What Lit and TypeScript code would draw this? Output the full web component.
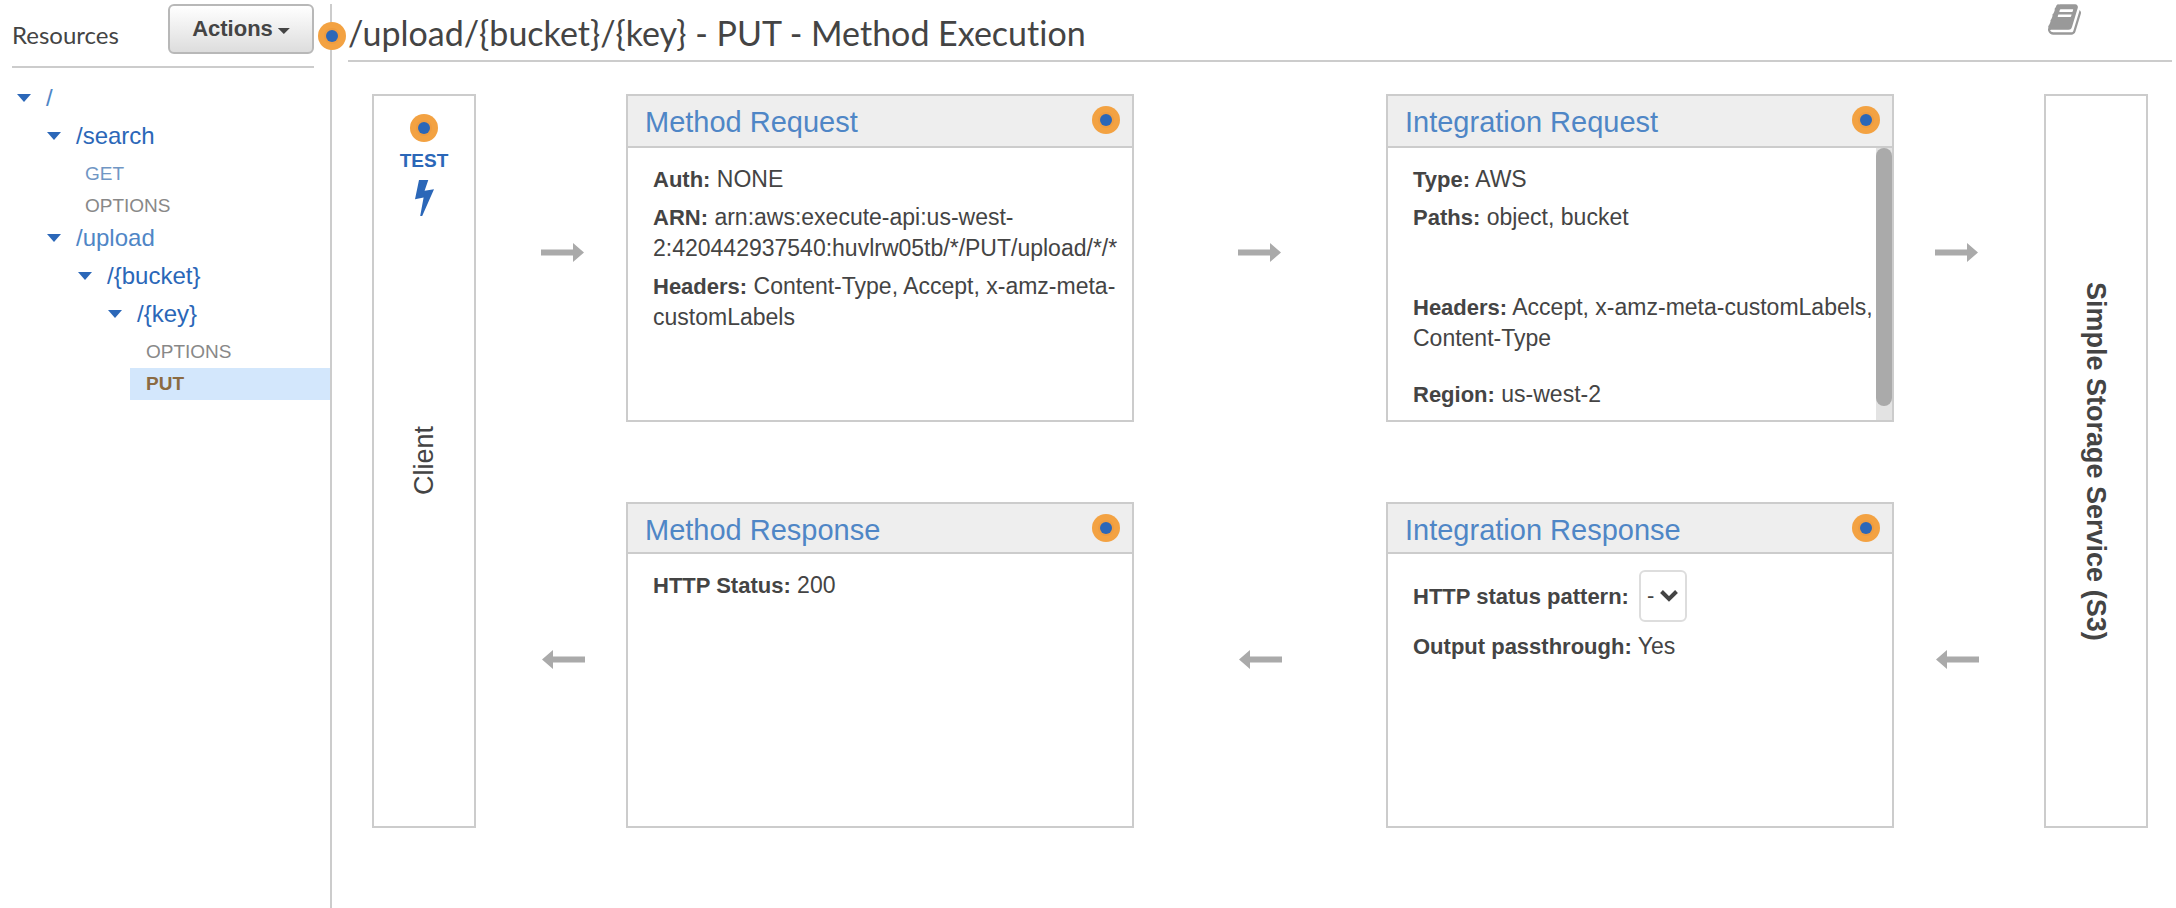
import { LitElement, html, css, svg, nothing } from "lit";
import { customElement, property } from "lit/decorators.js";

const palette = css`
  :host {
    --line: #ccc;
    --text: #444;
    --link: #2b67b8;
    --link-soft: #4f86c6;
    --sans: "Liberation Sans", Arial, Helvetica, sans-serif;
    --heading: Lato, "Open Sans", sans-serif;
    box-sizing: border-box;
  }
  *,
  *::before,
  *::after {
    box-sizing: border-box;
  }
`;

@customElement("beacon-dot")
export class BeaconDot extends LitElement {
  static styles = css`
    :host {
      display: block;
      flex: none;
      width: 28px;
      height: 28px;
    }
    svg {
      display: block;
    }
  `;
  render() {
    return html`<svg width="28" height="28" viewBox="0 0 28 28" aria-hidden="true">
      <circle cx="14" cy="14" r="14" fill="#f3a242" />
      <circle cx="14" cy="14" r="8" fill="#ee9c40" />
      <circle cx="14" cy="14" r="6" fill="#2b67b8" />
    </svg>`;
  }
}

@customElement("flow-arrow")
export class FlowArrow extends LitElement {
  @property() direction: "left" | "right" = "right";
  static styles = css`
    :host {
      display: block;
    }
    svg {
      display: block;
    }
  `;
  render() {
    const shape =
      this.direction === "right"
        ? svg`<path d="M0 6.5h32V0l11 9.5L32 19v-6.500H0z" />`
        : svg`<path d="M44 6.500H12V0L1 9.500 12 19v-6.500h32z" />`;
    return html`<svg width="44" height="19" viewBox="0 0 44 19" fill="#aaa" aria-hidden="true">${shape}</svg>`;
  }
}

interface TreeRow {
  label: string;
  depth: number;
  kind: "node" | "method";
  tone?: "soft" | "get" | "selected";
}

const rows: TreeRow[] = [
  { label: "/", depth: 0, kind: "node", tone: "soft" },
  { label: "/search", depth: 1, kind: "node" },
  { label: "GET", depth: 1, kind: "method", tone: "get" },
  { label: "OPTIONS", depth: 1, kind: "method" },
  { label: "/upload", depth: 1, kind: "node", tone: "soft" },
  { label: "/{bucket}", depth: 2, kind: "node" },
  { label: "/{key}", depth: 3, kind: "node" },
  { label: "OPTIONS", depth: 3, kind: "method" },
  { label: "PUT", depth: 3, kind: "method", tone: "selected" },
];

@customElement("resource-tree")
export class ResourceTree extends LitElement {
  static styles = [
    palette,
    css`
      :host {
        display: block;
        font-family: var(--sans);
      }
      ul {
        list-style: none;
        margin: 0;
        padding: 0;
      }
      .depth-1 {
        margin-left: 30px;
      }
      .depth-2 {
        margin-left: 61px;
      }
      .depth-3 {
        margin-left: 91px;
      }
      a {
        text-decoration: none;
        color: var(--link);
      }
      .node {
        display: flex;
        align-items: center;
        gap: 15px;
        height: 38px;
        padding: 0 0 6px 17px;
        font-size: 24px;
        line-height: 32px;
      }
      .caret {
        width: 14px;
        height: 8px;
        padding: 0;
        border: 0;
        background: var(--link);
        clip-path: polygon(0 0, 100% 0, 50% 100%);
      }
      .soft a {
        color: var(--link-soft);
      }
      .method {
        height: 32px;
        padding-left: 16px;
        font-size: 19px;
        line-height: 32px;
      }
      .method.depth-1 {
        padding-left: 55px;
      }
      .method.depth-3 {
        margin-left: 130px;
      }
      .method a {
        color: #888;
      }
      .get a {
        color: #7096c4;
      }
      .selected {
        background: #d3e7fc;
        font-weight: bold;
      }
      .selected a {
        color: #8b6b42;
      }
    `,
  ];
  render() {
    return html`<ul>
      ${rows.map(
        (r) => html`<li class="${r.kind} depth-${r.depth} ${r.tone ?? ""}">
          ${r.kind === "node"
            ? html`<button class="caret" aria-label="Collapse ${r.label}"></button>`
            : nothing}<a href="#">${r.label}</a>
        </li>`
      )}
    </ul>`;
  }
}

@customElement("stage-card")
export class StageCard extends LitElement {
  @property() heading = "";
  @property({ type: Boolean, reflect: true }) compact = false;
  @property({ type: Boolean, reflect: true }) scrolls = false;
  static styles = [
    palette,
    css`
      :host {
        display: flex;
        flex-direction: column;
        min-width: 0;
        border: 2px solid var(--line);
        font-family: var(--sans);
      }
      header {
        display: flex;
        align-items: flex-start;
        justify-content: space-between;
        height: 52px;
        padding: 10px 12px 0 17px;
        background: #eee;
        border-bottom: 2px solid var(--line);
      }
      :host([compact]) header {
        height: 50px;
      }
      h2 {
        margin: 0;
        font-size: 29px;
        font-weight: normal;
        line-height: 32px;
      }
      h2 a {
        color: var(--link-soft);
        text-decoration: none;
      }
      .body {
        flex: 1;
        display: flex;
        min-height: 0;
      }
      .content {
        flex: 1;
        min-width: 0;
        padding: 16px 0 0 25px;
      }
      .track {
        flex: none;
        width: 16px;
        padding-bottom: 14px;
        display: flex;
        background: #e3e3e3;
      }
      .thumb {
        flex: 1;
        border-radius: 8px;
        background: #aaa;
      }
    `,
  ];
  render() {
    return html`<header>
        <h2><a href="#">${this.heading}</a></h2>
        <beacon-dot></beacon-dot>
      </header>
      <div class="body">
        <div class="content"><slot></slot></div>
        ${this.scrolls ? html`<div class="track"><div class="thumb"></div></div>` : nothing}
      </div>`;
  }
}

@customElement("app-root")
export class AppRoot extends LitElement {
  static styles = [
    palette,
    css`
      :host {
        display: flex;
        min-height: 100vh;
        padding-top: 4px;
        background: #fff;
        color: var(--text);
        font-family: var(--sans);
        font-size: 23px;
        line-height: 31px;
      }
      .sidebar {
        flex: none;
        width: 332px;
        border-right: 2px solid var(--line);
      }
      .sidebar-head {
        display: flex;
        justify-content: space-between;
        margin: 0 16px 14px 12px;
        height: 64px;
        border-bottom: 2px solid var(--line);
      }
      .sidebar-head h2 {
        margin: 0;
        padding-top: 15px;
        font: 24px/32px var(--heading);
      }
      .actions {
        display: flex;
        align-items: center;
        justify-content: center;
        gap: 5px;
        width: 146px;
        height: 50px;
        padding: 0;
        border: 2px solid #b8b8b8;
        border-radius: 6px;
        background: linear-gradient(#fff, #ddd);
        color: var(--text);
        font: bold 22px/30px var(--sans);
      }
      .actions-caret {
        width: 12px;
        height: 6px;
        margin-top: 4px;
        background: var(--text);
        clip-path: polygon(0 0, 100% 0, 50% 100%);
      }
      main {
        flex: 1;
        min-width: 0;
        padding: 0 4px 0 16px;
        position: relative;
      }
      .divider-dot {
        position: absolute;
        left: -14px;
        top: 18px;
      }
      .title {
        display: flex;
        justify-content: space-between;
        align-items: flex-start;
        height: 58px;
        padding-right: 91px;
        border-bottom: 2px solid var(--line);
      }
      h1 {
        margin: 0;
        padding-top: 8px;
        font: 34px/42px var(--heading);
        font-variant-ligatures: none;
      }
      .docs {
        display: block;
        color: #999;
      }
      .docs svg,
      .test svg {
        display: block;
      }
      .flow {
        display: grid;
        grid-template-columns: 104px 150px 1fr 252px 1fr 150px 104px;
        grid-template-rows: 328px 326px;
        row-gap: 80px;
        padding: 32px 24px 0;
      }
      .endpoint {
        grid-row: 1 / 3;
        display: grid;
        grid-template-rows: 1fr auto 1fr;
        justify-items: center;
        border: 2px solid var(--line);
        font-size: 27px;
        line-height: 32px;
      }
      .endpoint-name {
        grid-row: 2;
        writing-mode: vertical-rl;
      }
      .upward {
        transform: rotate(180deg);
      }
      .service {
        grid-column: 7;
        font-weight: bold;
      }
      .test {
        display: flex;
        flex-direction: column;
        align-items: center;
        padding-top: 18px;
        color: var(--link);
        text-decoration: none;
        font-size: 19px;
        font-weight: bold;
        line-height: 24px;
      }
      .test-label {
        padding: 7px 0;
      }
      .gap {
        display: flex;
        align-items: center;
        justify-content: center;
        padding-bottom: 12px;
      }
      .gap.first {
        padding-left: 24px;
      }
      .gap.last {
        padding-right: 24px;
      }
      p {
        margin: 0 0 7px;
      }
      b,
      label {
        font-size: 22px;
        font-weight: bold;
      }
      .spaced {
        margin-top: 59px;
        margin-bottom: 25px;
      }
      .pattern {
        display: flex;
        align-items: center;
        gap: 10px;
        margin-bottom: 9px;
      }
      .picker {
        display: grid;
        align-items: center;
      }
      .picker select,
      .picker svg {
        grid-area: 1 / 1;
      }
      .picker select {
        appearance: none;
        width: 48px;
        height: 52px;
        padding: 0 0 0 6px;
        border: 2px solid #ddd;
        border-radius: 6px;
        background: #fff;
        color: var(--text);
        font: 22px/30px var(--sans);
      }
      .picker svg {
        justify-self: end;
        margin-right: 9px;
        pointer-events: none;
      }
    `,
  ];

  render() {
    return html`
      <aside class="sidebar">
        <div class="sidebar-head">
          <h2>Resources</h2>
          <button class="actions">Actions<span class="actions-caret"></span></button>
        </div>
        <resource-tree></resource-tree>
      </aside>
      <main>
        <beacon-dot class="divider-dot"></beacon-dot>
        <div class="title">
          <h1>/upload/{bucket}/{key} - PUT - Method Execution</h1>
          <a class="docs" href="#" aria-label="Documentation">
            <svg width="33" height="31" viewBox="0 128 1664 1536" fill="currentColor">
              <path
                d="M1639 478q40 57 18 129l-275 906q-19 64-76.500 107.500t-122.500 43.500h-923q-77 0-148.500-53.500t-99.500-131.500q-24-67-2-127 0-4 3-27t4-37q1-8-3-21.500t-3-19.500q2-11 8-21t16.500-23.500 16.500-23.500q23-38 45-91.500t30-91.500q3-10 .5-30t-.5-28q3-11 17-28t17-23q21-36 42-92t25-90q1-9-2.500-32t.5-28q4-13 22-30.500t22-22.500q19-26 42.500-84.500t27.500-96.500q1-8-3-25.500t-2-26.500q2-8 9-18t18-23 17-21q8-12 16.500-30.500t15-35 16-36 19.500-32 26.500-23.500 36-11.500 47.500 5.500l-1 3q38-9 51-9h761q74 0 114 56t18 130l-274 906q-36 119-71.500 153.500t-128.500 34.500h-869q-27 0-38 15-11 16-1 43 24 70 144 70h923q29 0 56-15.500t35-41.500l300-987q7-22 5-57 38 15 59 43zm-1064 2q-4 13 2 22.500t20 9.500h608q13 0 25.500-9.500t16.500-22.500l21-64q4-13-2-22.500t-20-9.500h-608q-13 0-25.500 9.500t-16.500 22.500zm-83 256q-4 13 2 22.500t20 9.500h608q13 0 25.500-9.500t16.500-22.500l21-64q4-13-2-22.500t-20-9.500h-608q-13 0-25.500 9.500t-16.500 22.500z"
              />
            </svg>
          </a>
        </div>
        <div class="flow">
          <section class="endpoint">
            <a class="test" href="#">
              <beacon-dot></beacon-dot>
              <span class="test-label">TEST</span>
              <svg width="19" height="36" viewBox="0 0 19 36" fill="currentColor" aria-hidden="true">
                <path d="M4 0h9.300L9.600 10.700 19 9.300 7.200 36H5.200L8.600 17.600 0 19.300z" />
              </svg>
            </a>
            <span class="endpoint-name upward">Client</span>
          </section>
          <div class="gap first"><flow-arrow></flow-arrow></div>
          <stage-card heading="Method Request">
            <p><b>Auth:</b> NONE</p>
            <p><b>ARN:</b> arn:aws:execute-api:us-west-2:420442937540:huvlrw05tb/*/PUT/upload/*/*</p>
            <p><b>Headers:</b> Content-Type, Accept, x-amz-meta-customLabels</p>
          </stage-card>
          <div class="gap"><flow-arrow></flow-arrow></div>
          <stage-card heading="Integration Request" scrolls>
            <p><b>Type:</b> AWS</p>
            <p><b>Paths:</b> object, bucket</p>
            <p class="spaced"><b>Headers:</b> Accept, x-amz-meta-customLabels, Content-Type</p>
            <p><b>Region:</b> us-west-2</p>
          </stage-card>
          <div class="gap last"><flow-arrow></flow-arrow></div>
          <section class="endpoint service">
            <span class="endpoint-name">Simple Storage Service (S3)</span>
          </section>
          <div class="gap first"><flow-arrow direction="left"></flow-arrow></div>
          <stage-card heading="Method Response" compact>
            <p><b>HTTP Status:</b> 200</p>
          </stage-card>
          <div class="gap"><flow-arrow direction="left"></flow-arrow></div>
          <stage-card heading="Integration Response" compact>
            <div class="pattern">
              <label for="pattern">HTTP status pattern:</label>
              <span class="picker">
                <select id="pattern">
                  <option>-</option>
                </select>
                <svg width="18" height="12" viewBox="0 0 18 12" fill="none" stroke="#444" stroke-width="4" aria-hidden="true">
                  <path d="M1.500 1.500 9 9l7.500-7.500" />
                </svg>
              </span>
            </div>
            <p><b>Output passthrough:</b> Yes</p>
          </stage-card>
          <div class="gap last"><flow-arrow direction="left"></flow-arrow></div>
        </div>
      </main>
    `;
  }
}
